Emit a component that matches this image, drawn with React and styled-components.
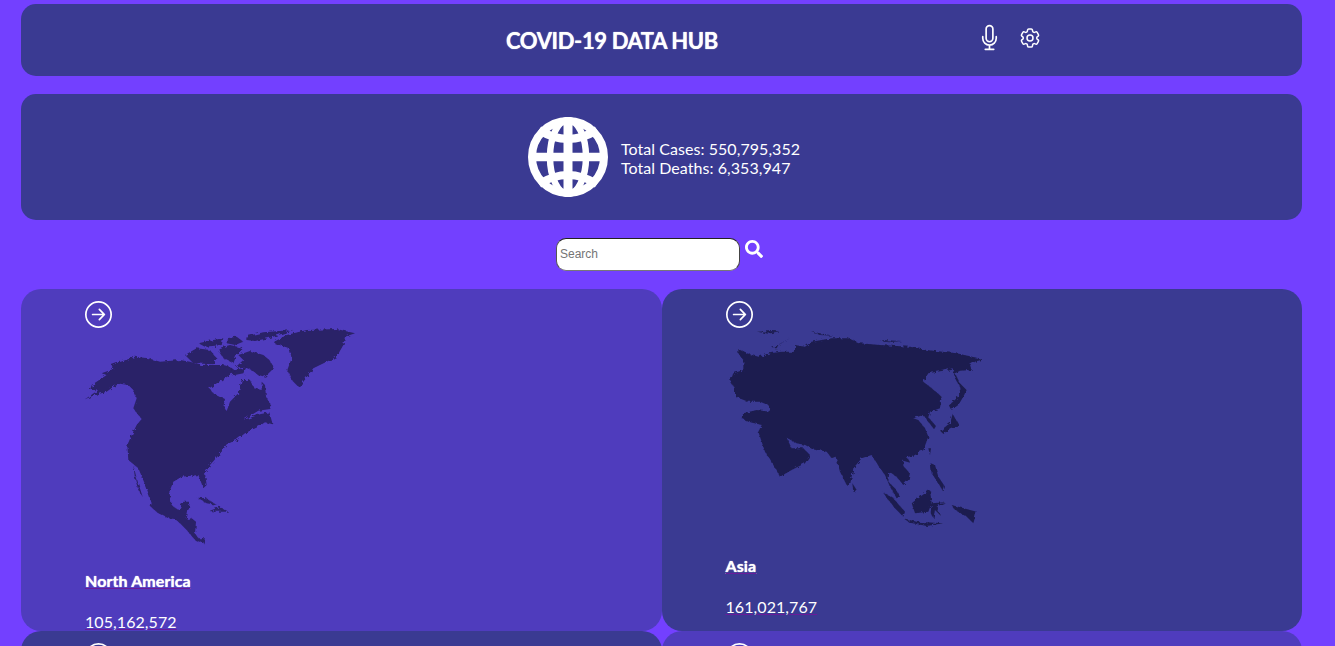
import React from "react";
import styled, { createGlobalStyle } from "styled-components";
import { BsArrowRightCircle } from "react-icons/bs";
import { HiOutlineMicrophone, HiOutlineCog6Tooth } from "react-icons/hi2";
import { FaSearch } from "react-icons/fa";

const Global = createGlobalStyle`
  html, body { margin: 0; padding: 0; height: 100%; overflow: hidden; background: #7340ff; }
  body { font-family: "Lato", "Liberation Sans", sans-serif; color: #fff; }
`;
const Page = styled.div`
  height: 646px; overflow: hidden; box-sizing: border-box;
  padding: 4px 33px 0 21px; display: flex; flex-direction: column;
`;
const Panel = styled.section`
  background: #3a3a92; border-radius: 15px; flex: none;
`;
const Header = styled(Panel)`
  height: 72px; display: flex; align-items: flex-start; padding-left: 485px; box-sizing: border-box;
`;
const Title = styled.h1`
  margin: 24px 0 0; width: 470px; flex: none; font-size: 22px; line-height: 26px; font-weight: 700; letter-spacing: -0.38px;
  text-shadow: 0 0 1px #fff;
`;
const HeaderIcon = styled.span`
  display: flex; flex: none; margin-top: ${p => p.$top}px; margin-right: ${p => p.$right || 0}px; font-size: ${p => p.$size}px;
`;
const Summary = styled(Panel)`
  margin-top: 18px; height: 126px; display: flex; align-items: center; justify-content: center; gap: 13px; padding-left: 5px;
`;
const Stats = styled.div`
  font-size: 16px; line-height: 19px; padding-top: 1px; letter-spacing: 0.06px;
`;
const SearchRow = styled.form`
  margin-top: 18px; height: 33px; flex: none; display: flex; justify-content: center; gap: 5px; padding-right: 4px;
`;
const SearchInput = styled.input`
  width: 184px; height: 33px; box-sizing: border-box; padding: 0 3px 2px; border-radius: 10px;
  border: 1px solid; border-color: #222 #444 #777 #555; background: #fff;
  font: 12px "Liberation Sans", Arial, sans-serif; outline: none;
  &::placeholder { color: #757575; }
`;
const SearchIcon = styled.span`
  display: flex; font-size: 18px; padding-top: 2px;
`;
const Grid = styled.div`
  margin-top: 18px; display: grid; grid-template-columns: 1fr 1fr; grid-auto-rows: 342px;
`;
const Card = styled.article`
  background: ${p => p.$bg}; border-radius: 20px; padding: 12px 0 0 64px; box-sizing: border-box; overflow: hidden;
`;
const Go = styled.div`
  display: flex; font-size: 27px; height: 27px;
`;
const Map = styled.svg`
  display: block; margin-bottom: 18px; fill: ${p => p.$fill};
`;
const Land = styled.g`
  filter: url(#coast);
`;
const Name = styled.a`
  display: block; width: fit-content; font-size: 16px; line-height: 20px; font-weight: 700; letter-spacing: 0.1px; margin-bottom: 21px; text-shadow: 0 0 1px #fff;
  text-decoration: underline; text-decoration-color: #6a1b9a;
`;
const Count = styled.a`
  display: block; width: fit-content; font-size: 16px; line-height: 20px; letter-spacing: 0.08px;
  text-decoration: underline; text-decoration-color: #6a1b9a;
`;

const Globe = () => (
  <svg width="80" height="80" viewBox="0 0 80 80" fill="none" stroke="#fff">
    <circle cx="40" cy="40" r="36" strokeWidth="8" fill="#3a3a92" />
    <ellipse cx="40" cy="40" rx="18" ry="37" strokeWidth="6.5" />
    <path d="M40 3V77" strokeWidth="9" />
    <path d="M3 40H77" strokeWidth="8.5" />
    <path d="M11 13Q40 31 69 13" strokeWidth="8" />
    <path d="M11 67Q40 49 69 67" strokeWidth="8" />
  </svg>
);

const northAmerica = [
  "45,313 75,300 110,290 130,275 150,266 175,270 190,285 200,310 190,340 205,360 215,372 200,390 185,420 172,450 175,495 205,520 230,580 245,625 242,635 265,655 295,670 315,672 330,685 350,705 375,735 400,745 405,730 385,730 375,715 378,680 365,670 350,672 360,620 340,620 325,645 305,630 298,590 310,560 335,545 385,540 400,580 410,570 405,535 420,510 455,470 470,448 500,435 525,415 565,395 585,382 608,388 598,352 570,358 520,375 565,347 600,342 605,335 588,305 585,270 575,260 575,285 552,280 540,255 515,255 505,295 480,320 470,348 460,335 465,312 430,295 418,280 455,255 480,240 500,230 480,215 460,210 390,210 360,200 330,195 270,200 235,190 195,185 125,210 130,222 95,235 110,240 65,270 60,285 85,285",
  "613,140 650,120 710,105 800,102 855,115 825,125 820,150 800,185 770,200 730,220 700,260 685,275 665,255 652,225 665,190 658,160 613,145",
  "190,510 200,550 218,605 205,585 195,550",
  "345,180 380,160 420,165 440,190 430,208 370,205",
  "505,180 540,168 580,180 598,195 613,218 585,245 565,240 545,225 520,215 495,218 520,195",
  "525,125 580,112 670,105 600,128 555,138 530,135",
  "385,145 430,135 460,130 455,150 405,155",
  "470,130 500,125 520,140 495,150 470,145",
  "445,160 480,150 520,160 500,180 490,205 460,190 450,175",
  "480,230 530,215 520,235 495,240",
  "380,608 410,610 440,630 410,625",
  "418,648 450,635 475,650 440,650",
];
const asia = [
  "45,260 55,235 85,225 85,195 70,175 70,162 95,175 130,185 165,175 200,170 240,170 240,150 270,155 290,140 350,130 400,130 435,145 495,150 585,155 635,165 725,175 805,193 780,200 765,210 770,225 735,227 720,235 735,265 755,285 745,305 730,330 710,345 703,330 725,310 740,285 720,250 713,220 685,227 640,235 625,260 650,280 680,305 675,340 645,350 640,367 663,393 657,403 640,380 625,360 595,370 610,375 630,400 640,425 625,465 600,480 575,487 585,503 565,497 565,513 585,535 580,555 565,570 545,545 523,530 520,560 540,580 555,605 545,610 525,575 510,540 495,520 470,480 440,490 415,520 405,570 395,570 375,530 362,485 350,490 335,470 290,460 270,450 245,445 215,428 230,460 265,460 285,480 270,505 230,525 195,545 175,510 150,470 130,410 140,390 100,380 80,370 85,355 125,345 165,350 160,330 135,320 100,320 60,305 60,280",
  "675,407 705,385 713,357 732,390 705,400 685,417",
  "412,565 425,585 415,590",
  "590,625 630,595 645,585 650,625 640,650 600,655",
  "505,593 535,610 570,650 565,665 540,640 520,615",
  "565,670 605,680 685,685 635,693 585,683",
  "710,630 785,650 775,685 755,665 720,645",
  "647,505 660,510 670,545 690,575 685,590 670,565 650,535",
  "650,625 690,622 665,635 675,660 660,645 655,670 647,655",
  "640,460 648,460 645,480",
  "170,160 225,130 190,150 185,160",
  "125,110 195,108 160,116",
  "290,110 355,122 315,120",
  "495,135 560,138 520,142",
];

export default function App() {
  return (
    <>
      <Global />
      <svg width="0" height="0" style={{ display: "block", height: 0 }} aria-hidden="true">
        <filter id="coast" x="-5%" y="-5%" width="110%" height="110%">
          <feTurbulence type="fractalNoise" baseFrequency="0.09" numOctaves="3" seed="4" result="n" />
          <feDisplacementMap in="SourceGraphic" in2="n" scale="14" />
        </filter>
      </svg>
      <Page>
        <Header>
          <Title>COVID-19 DATA HUB</Title>
          <HeaderIcon $top={20} $size={27} $right={15}><HiOutlineMicrophone /></HeaderIcon>
          <HeaderIcon $top={22} $size={24}><HiOutlineCog6Tooth /></HeaderIcon>
        </Header>
        <Summary>
          <Globe />
          <Stats>Total Cases: 550,795,352<br />Total Deaths: 6,353,947</Stats>
        </Summary>
        <SearchRow>
          <SearchInput placeholder="Search" />
          <SearchIcon><FaSearch /></SearchIcon>
        </SearchRow>
        <Grid>
          <Card $bg="#4f3cbd">
            <Go><BsArrowRightCircle /></Go>
            <Map $fill="#2a2068" width="285" height="225" viewBox="45 99 855 675">
              <Land>{northAmerica.map(p => <polygon key={p} points={p} />)}</Land>
            </Map>
            <Name>North America</Name>
            <Count>105,162,572</Count>
          </Card>
          <Card $bg="#3a3a92">
            <Go><BsArrowRightCircle /></Go>
            <Map $fill="#1c1c50" width="289" height="210" viewBox="33 99 867 630">
              <Land>{asia.map(p => <polygon key={p} points={p} />)}</Land>
            </Map>
            <Name>Asia</Name>
            <Count>161,021,767</Count>
          </Card>
          <Card $bg="#3a3a92"><Go><BsArrowRightCircle /></Go></Card>
          <Card $bg="#4f3cbd"><Go><BsArrowRightCircle /></Go></Card>
        </Grid>
      </Page>
    </>
  );
}
